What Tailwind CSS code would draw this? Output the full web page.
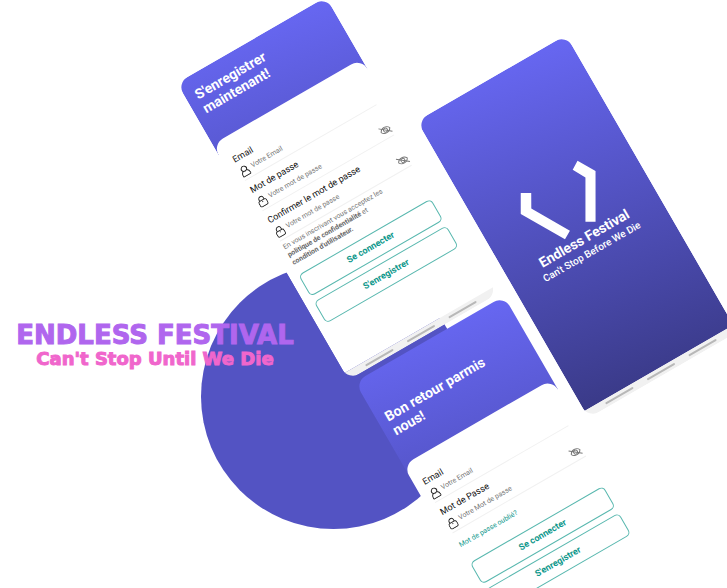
<!DOCTYPE html>
<html lang="fr">
<head>
<meta charset="utf-8">
<title>Endless Festival</title>
<script src="https://cdn.jsdelivr.net/npm/@tailwindcss/browser@4"></script>
</head>
<body class="bg-white">
<svg class="hidden">
  <symbol id="user" viewBox="0 0 20 24"><g fill="none" stroke="currentColor" stroke-width="1.800" stroke-linejoin="round"><path d="M6 11.500A5.500 5.500 0 1 1 14 11.500C17 13 18.500 16 18.500 20.500Q18.500 22 17 22H3Q1.500 22 1.500 20.500C1.500 16 3 13 6 11.500Q10 14 14 11.500"/></g></symbol>
  <symbol id="lock" viewBox="0 0 20 24"><g fill="none" stroke="currentColor" stroke-width="1.800"><rect x="1.500" y="10" width="17" height="12" rx="3.500"/><path d="M5 10V7a5 5 0 0 1 10 0v3M10 12v2"/></g></symbol>
  <symbol id="eye" viewBox="0 0 28 24"><g fill="none" stroke="currentColor" stroke-width="1.800"><path d="M4 12C8 4 20 4 24 12 20 20 8 20 4 12Z"/><circle cx="14" cy="12" r="4"/><path d="M3 3l22 18"/></g></symbol>
</svg>
<main class="relative min-h-screen overflow-hidden font-['Roboto',sans-serif]">
  <div class="absolute left-[201px] top-[264px] size-[265px] rounded-full bg-[#5353c3]"></div>

  <!-- Sign-up screen -->
  <section class="absolute left-[177px] top-[83px] flex h-[343px] w-[172px] origin-top-left -rotate-30 flex-col overflow-hidden rounded-b-xl">
    <h2 class="h-[83px] rounded-t-xl bg-[linear-gradient(190deg,#6767f2,#5959d2)] px-[10px] pt-3 text-[14px] leading-4 font-bold text-white">S'enregistrer<br>maintenant!</h2>
    <form class="-mt-3 flex grow flex-col rounded-t-xl bg-white px-[10px] pt-[19px]">
      <div class="flex flex-col gap-[6px]">
        <div>
          <label for="su-email" class="block text-[9px] leading-[11px] text-[#111]">Email</label>
          <div class="flex h-[18px] items-center gap-[3px] border-b border-[#f1f1f1]">
            <svg class="h-3 w-[10px] shrink-0 text-[#222]"><use href="#user"/></svg>
            <input id="su-email" type="email" placeholder="Votre Email" class="min-w-0 grow text-[7px] leading-[9px] placeholder:text-[#777]">
          </div>
        </div>
        <div>
          <label for="su-pass" class="block text-[9px] leading-[11px] text-[#111]">Mot de passe</label>
          <div class="flex h-[18px] items-center gap-[3px] border-b border-[#f1f1f1]">
            <svg class="h-3 w-[10px] shrink-0 text-[#222]"><use href="#lock"/></svg>
            <input id="su-pass" type="password" placeholder="Votre mot de passe" class="min-w-0 grow text-[7px] leading-[9px] placeholder:text-[#777]">
            <button type="button" aria-label="Afficher" class="-mr-[2px]"><svg class="h-3 w-[14px] text-[#777]"><use href="#eye"/></svg></button>
          </div>
        </div>
        <div>
          <label for="su-conf" class="block text-[9px] leading-[11px] text-[#111]">Confirmer le mot de passe</label>
          <div class="flex h-[18px] items-center gap-[3px] border-b border-[#f1f1f1]">
            <svg class="h-3 w-[10px] shrink-0 text-[#222]"><use href="#lock"/></svg>
            <input id="su-conf" type="password" placeholder="Votre mot de passe" class="min-w-0 grow text-[7px] leading-[9px] placeholder:text-[#777]">
            <button type="button" aria-label="Afficher" class="-mr-[2px]"><svg class="h-3 w-[14px] text-[#777]"><use href="#eye"/></svg></button>
          </div>
        </div>
      </div>
      <p class="mt-[3px] text-[7px] leading-[9px] text-[#777]">En vous inscrivant vous acceptez les<br><b class="text-[#666]">politique de confidentialité</b> et<br><b class="text-[#666]">condition d'utilisateur.</b></p>
      <div class="-ml-px mt-2 flex flex-col gap-[6px]">
        <button type="button" class="h-[25px] rounded-[5px] border border-[#0f988c]/70 text-[9px] font-bold text-[#0f988c]">Se connecter</button>
        <button type="button" class="h-[25px] rounded-[5px] border border-[#0f988c]/70 text-[9px] font-bold text-[#0f988c]">S'enregistrer</button>
      </div>
    </form>
    <div class="flex h-2 items-center justify-center gap-4 bg-[#f1f1f1]">
      <i class="h-[2px] w-8 rounded-full bg-[#b8b8b8]"></i><i class="h-[2px] w-8 rounded-full bg-[#b8b8b8]"></i><i class="h-[2px] w-8 rounded-full bg-[#b8b8b8]"></i>
    </div>
  </section>

  <!-- Splash screen -->
  <section class="absolute left-[417px] top-[121px] flex h-[343px] w-[172px] origin-top-left -rotate-30 flex-col overflow-hidden rounded-b-xl">
    <div class="flex grow flex-col items-center rounded-t-xl bg-[linear-gradient(190deg,#6767f2,#3a3a88)] pt-[114px] text-white">
      <svg class="h-[63px] w-[87px]" viewBox="42 114 87 63" fill="#fff"><path d="M52.800 114.300 61.900 119.500 54.200 133 76.500 171.600 68 176.500 42.300 132.500ZM118.200 114.600 128.600 132.600 103.300 176.500 94.500 171.500 116.600 133.200 109.500 120Z"/></svg>
      <h2 class="text-[14px] leading-4 font-bold">Endless Festival</h2>
      <p class="text-[10px] leading-4 font-medium">Can't Stop Before We Die</p>
    </div>
    <div class="flex h-2 items-center justify-center gap-4 bg-[#f1f1f1]">
      <i class="h-[2px] w-8 rounded-full bg-[#b8b8b8]"></i><i class="h-[2px] w-8 rounded-full bg-[#b8b8b8]"></i><i class="h-[2px] w-8 rounded-full bg-[#b8b8b8]"></i>
    </div>
  </section>

  <!-- Sign-in screen -->
  <section class="absolute left-[355px] top-[382px] flex h-[343px] w-[172px] origin-top-left -rotate-30 flex-col">
    <h2 class="h-[108px] rounded-t-xl bg-[linear-gradient(190deg,#6767f2,#5656cb)] px-[9px] pt-[38px] text-[14px] leading-4 font-bold text-white">Bon retour parmis<br>nous!</h2>
    <form class="-mt-3 flex grow flex-col rounded-xl bg-white px-[9px] pt-5">
      <div class="flex flex-col gap-[6px]">
        <div>
          <label for="si-email" class="block text-[9px] leading-[11px] text-[#111]">Email</label>
          <div class="flex h-[18px] items-center gap-[3px] border-b border-[#f1f1f1]">
            <svg class="h-3 w-[10px] shrink-0 text-[#222]"><use href="#user"/></svg>
            <input id="si-email" type="email" placeholder="Votre Email" class="min-w-0 grow text-[7px] leading-[9px] placeholder:text-[#777]">
          </div>
        </div>
        <div>
          <label for="si-pass" class="block text-[9px] leading-[11px] text-[#111]">Mot de Passe</label>
          <div class="flex h-[18px] items-center gap-[3px] border-b border-[#f1f1f1]">
            <svg class="h-3 w-[10px] shrink-0 text-[#222]"><use href="#lock"/></svg>
            <input id="si-pass" type="password" placeholder="Votre Mot de passe" class="min-w-0 grow text-[7px] leading-[9px] placeholder:text-[#777]">
            <button type="button" aria-label="Afficher"><svg class="h-3 w-[14px] text-[#777]"><use href="#eye"/></svg></button>
          </div>
        </div>
      </div>
      <a href="#" class="mt-[10px] text-[7px] leading-[9px] text-[#0f988c]">Mot de passe oublié?</a>
      <div class="mt-[15px] flex flex-col gap-[6px]">
        <button type="button" class="h-[25px] rounded-[5px] border border-[#0f988c]/70 text-[9px] font-bold text-[#0f988c]">Se connecter</button>
        <button type="button" class="h-[25px] rounded-[5px] border border-[#0f988c]/70 text-[9px] font-bold text-[#0f988c]">S'enregistrer</button>
      </div>
    </form>
  </section>

  <header class="absolute left-[12px] top-[321px] w-[286px] text-center font-['DejaVu_Sans',sans-serif] font-bold whitespace-nowrap">
    <h1 class="text-[26px] leading-7 text-[#b066ee] [-webkit-text-stroke:1px_#b066ee]">ENDLESS FESTIVAL</h1>
    <p class="text-[18px] leading-5 text-[#f066cc] [-webkit-text-stroke:1px_#f066cc]">Can't Stop Until We Die</p>
  </header>
</main>
</body>
</html>
